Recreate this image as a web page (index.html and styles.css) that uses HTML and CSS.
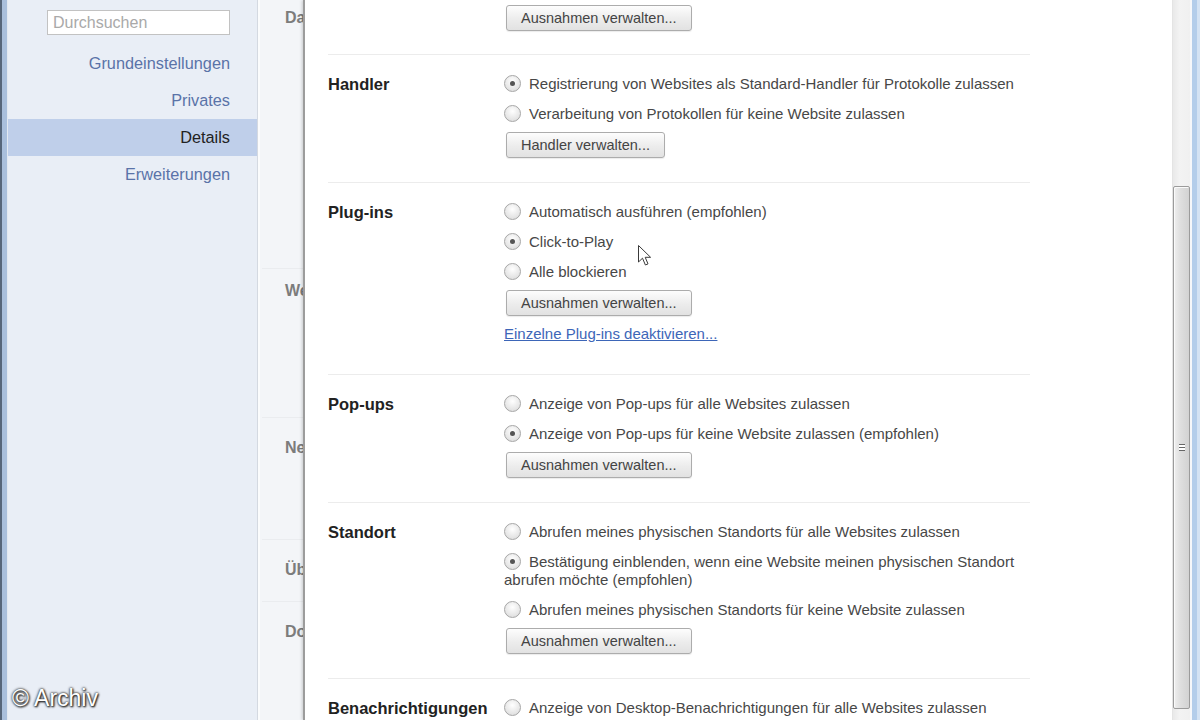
FILE: index.html
```html
<!DOCTYPE html>
<html lang="de">
<head>
<meta charset="utf-8">
<title>Inhaltseinstellungen</title>
<link rel="stylesheet" href="styles.css">
</head>
<body>
<div class="window">
  <div class="frame-left"></div>
  <aside class="sidebar">
    <div class="search">Durchsuchen</div>
    <ul class="nav">
      <li class="nav-item">Grundeinstellungen</li>
      <li class="nav-item">Privates</li>
      <li class="nav-item active">Details</li>
      <li class="nav-item">Erweiterungen</li>
    </ul>
  </aside>
  <div class="bgcol">
    <div class="bg-head h-da">Datenschutz</div>
    <div class="bg-sep s1"></div>
    <div class="bg-head h-we">Web-Inhalte</div>
    <div class="bg-sep s2"></div>
    <div class="bg-head h-ne">Netzwerk</div>
    <div class="bg-sep s3"></div>
    <div class="bg-head h-ub">Übersetzen</div>
    <div class="bg-sep s4"></div>
    <div class="bg-head h-do">Downloads</div>
  </div>
  <div class="dialog">
    <div class="content">
      <section class="section first">
        <div class="label"></div>
        <div class="options">
          <button class="btn">Ausnahmen verwalten...</button>
        </div>
      </section>
      <section class="section">
        <div class="label">Handler</div>
        <div class="options">
          <div class="opt"><span class="radio on"></span>Registrierung von Websites als Standard-Handler für Protokolle zulassen</div>
          <div class="opt"><span class="radio"></span>Verarbeitung von Protokollen für keine Website zulassen</div>
          <button class="btn">Handler verwalten...</button>
        </div>
      </section>
      <section class="section">
        <div class="label">Plug-ins</div>
        <div class="options">
          <div class="opt"><span class="radio"></span>Automatisch ausführen (empfohlen)</div>
          <div class="opt"><span class="radio on"></span>Click-to-Play</div>
          <div class="opt"><span class="radio"></span>Alle blockieren</div>
          <button class="btn">Ausnahmen verwalten...</button>
          <a class="link" href="#">Einzelne Plug-ins deaktivieren...</a>
        </div>
      </section>
      <section class="section">
        <div class="label">Pop-ups</div>
        <div class="options">
          <div class="opt"><span class="radio"></span>Anzeige von Pop-ups für alle Websites zulassen</div>
          <div class="opt"><span class="radio on"></span>Anzeige von Pop-ups für keine Website zulassen (empfohlen)</div>
          <button class="btn">Ausnahmen verwalten...</button>
        </div>
      </section>
      <section class="section">
        <div class="label">Standort</div>
        <div class="options">
          <div class="opt"><span class="radio"></span>Abrufen meines physischen Standorts für alle Websites zulassen</div>
          <div class="opt"><span class="radio on"></span>Bestätigung einblenden, wenn eine Website meinen physischen Standort abrufen möchte (empfohlen)</div>
          <div class="opt"><span class="radio"></span>Abrufen meines physischen Standorts für keine Website zulassen</div>
          <button class="btn">Ausnahmen verwalten...</button>
        </div>
      </section>
      <section class="section">
        <div class="label">Benachrichtigungen</div>
        <div class="options">
          <div class="opt"><span class="radio"></span>Anzeige von Desktop-Benachrichtigungen für alle Websites zulassen</div>
        </div>
      </section>
    </div>
    <div class="scrollbar">
      <div class="thumb"><span class="grip"></span></div>
    </div>
  </div>
  <div class="frame-right"></div>

  <svg class="cursor" width="16" height="24" viewBox="0 0 16 24">
    <path d="M1.5 1.5 L1.5 18 L5.5 14.2 L8.4 21 L11 19.9 L8.2 13.3 L13.6 13.3 Z" fill="#fff" stroke="#3a3a3a" stroke-width="1" stroke-linejoin="round"/>
  </svg>
  <div class="watermark">© Archiv</div>
</div>
</body>
</html>
```
FILE: styles.css
```css
html, body {
  margin: 0;
  padding: 0;
}
body {
  width: 1200px;
  height: 720px;
  overflow: hidden;
  font-family: "Liberation Sans", Arial, sans-serif;
  background: #fff;
}
.window {
  position: relative;
  display: flex;
  height: 720px;
}
.frame-left {
  width: 8px;
  flex: none;
  background: linear-gradient(to right, #56667a 0, #56667a 2px, #a9bfdc 2px, #a9bfdc 7px, #e2e9f2 7px);
}
.sidebar {
  width: 250px;
  flex: none;
  box-sizing: border-box;
  background: #e9eef6;
  border-right: 1px solid #d4d9e1;
  padding-top: 10px;
}
.search {
  margin-left: 39px;
  width: 183px;
  height: 25px;
  box-sizing: border-box;
  border: 1px solid #c2c2c2;
  background: #fff;
  font-size: 16px;
  line-height: 23px;
  color: #a9a9a9;
  padding-left: 5px;
}
.nav {
  list-style: none;
  margin: 10px 0 0;
  padding: 0;
}
.nav-item {
  height: 37px;
  line-height: 37px;
  text-align: right;
  padding-right: 27px;
  font-size: 16.3px;
  color: #5a73a8;
}
.nav-item.active {
  background: #bfcfea;
  color: #222;
}
.bgcol {
  width: 45px;
  flex: none;
  box-sizing: border-box;
  background: #f3f5f8;
  border-left: 2px solid #fbfcfd;
  overflow: hidden;
  padding-left: 25px;
}
.bg-head {
  white-space: nowrap;
  font-weight: bold;
  font-size: 16px;
  line-height: 20px;
  color: #7c7c7c;
}
.bg-sep {
  height: 1px;
  margin-left: -23px;
  background: #eaecef;
}
.h-da { margin-top: 8px; }
.s1 { margin-top: 240px; }
.h-we { margin-top: 12px; }
.s2 { margin-top: 116px; }
.h-ne { margin-top: 20px; }
.s3 { margin-top: 81px; }
.h-ub { margin-top: 20px; }
.s4 { margin-top: 21px; }
.h-do { margin-top: 20px; }

.dialog {
  flex: 1;
  display: flex;
  border-left: 2px solid #9c9c9c;
  background: #fff;
  box-shadow: -1px 0 3px rgba(0, 0, 0, 0.18);
  min-width: 0;
}
.content {
  flex: 1;
  padding-left: 23px;
  min-width: 0;
}
.section {
  display: flex;
  width: 702px;
  border-top: 1px solid #ececec;
  padding: 14px 0 24px;
}
.section.first {
  border-top: none;
  padding: 2px 0 23px;
}
.label {
  width: 176px;
  flex: none;
  padding-top: 6px;
  line-height: 18px;
  font-weight: bold;
  font-size: 16.5px;
  color: #222;
}
.options {
  flex: 1;
  display: flex;
  flex-direction: column;
  align-items: flex-start;
  font-size: 15px;
  color: #474747;
  min-width: 0;
}
.opt {
  padding: 6px 0;
  line-height: 18px;
}
.radio {
  position: relative;
  display: inline-block;
  width: 17px;
  height: 17px;
  box-sizing: border-box;
  border-radius: 50%;
  border: 1px solid #a6a6a6;
  background: radial-gradient(circle at 50% 35%, #ffffff 0, #efefef 40%, #d8d8d8 100%);
  vertical-align: top;
  margin-right: 8px;
}
.radio.on::after {
  content: "";
  position: absolute;
  left: 5px;
  top: 5px;
  width: 5px;
  height: 5px;
  border-radius: 50%;
  background: #555;
}
.btn {
  display: block;
  height: 26px;
  box-sizing: border-box;
  margin: 3px 0 0 2px;
  padding: 0 14px;
  border: 1px solid #acacac;
  border-radius: 3px;
  background: linear-gradient(#fdfdfd, #ececec 55%, #e2e2e2);
  box-shadow: 0 1px 1px rgba(0, 0, 0, 0.08);
  font-family: "Liberation Sans", Arial, sans-serif;
  font-size: 14.5px;
  line-height: 24px;
  color: #444;
}
.link {
  margin: 9px 0 7px;
  line-height: 18px;
  font-size: 15px;
  color: #3d66b8;
  text-decoration: underline;
}
.scrollbar {
  width: 18px;
  flex: none;
  box-sizing: border-box;
  background: linear-gradient(to right, #e9e9e9, #f3f3f3 40%, #f0f0f0);
  border-left: 1px solid #e4e4e4;
  padding-top: 186px;
}
.thumb {
  height: 523px;
  box-sizing: border-box;
  border: 1px solid #9b9b9b;
  border-radius: 2px;
  background: linear-gradient(to right, #efefef, #dedede 45%, #d2d2d2);
  box-shadow: inset 1px 1px 0 #fafafa;
  display: flex;
  align-items: center;
  justify-content: center;
}
.grip {
  display: block;
  width: 6px;
  height: 5px;
  border-top: 1px solid #666;
  border-bottom: 1px solid #666;
  background: linear-gradient(#fff 0, #fff 2px, #666 2px, #666 3px, #fff 3px);
}
.frame-right {
  width: 10px;
  flex: none;
  background: linear-gradient(to right, #f5f7fa 0, #f5f7fa 2px, #b3cdea 2px, #b3cdea 7px, #d3e2f3 7px);
}
.cursor {
  position: absolute;
  left: 637px;
  top: 244px;
}
.watermark {
  position: absolute;
  left: 12px;
  top: 685px;
  font-family: "Liberation Sans", Arial, sans-serif;
  font-size: 23px;
  color: #fff;
  text-shadow: 0 0 2px #333, 0 0 3px #444, 1px 1px 2px #000;
}
```
